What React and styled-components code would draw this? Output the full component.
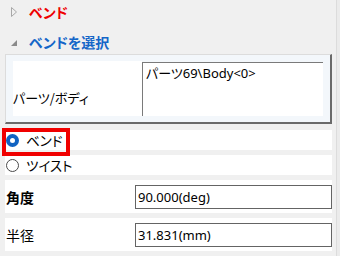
import React from 'react';
import styled, { createGlobalStyle } from 'styled-components';

const GlobalStyle = createGlobalStyle`
  html, body {
    margin: 0;
    padding: 0;
    background: #f0f0f0;
  }
  body {
    font-family: "Noto Sans", "Noto Sans CJK JP", sans-serif;
    color: #000;
  }
`;

const Page = styled.div`
  position: relative;
  width: 340px;
  height: 256px;
  overflow: hidden;
  display: flex;
`;

const Content = styled.div`
  width: 336px;
  display: flex;
  flex-direction: column;
`;

const Edge = styled.div`
  width: 3px;
  border-left: 1px solid #dcdcdc;
  background: #ebebeb;
`;

const Header = styled.div`
  height: 24px;
  margin-top: ${(p) => p.$top || 0}px;
  padding-left: 10px;
  display: flex;
  align-items: center;
  gap: 11px;
`;

const HeaderText = styled.span`
  font-family: "Noto Sans CJK JP", sans-serif;
  font-feature-settings: "palt";
  font-weight: 700;
  font-size: 14px;
  color: ${(p) => p.$color};
`;

const Icon = styled.svg`
  width: 8px;
  height: 10px;
  flex: none;
`;

const GroupBox = styled.div`
  margin: 0 4px 0 5px;
  height: 70px;
  box-sizing: border-box;
  border-top: 1px solid #dcdcdc;
  border-left: 1px solid #dcdcdc;
  border-right: 2px solid #6a6a6a;
  border-bottom: 2px solid #6a6a6a;
  background: #f3f7fb;
  padding: 6px 7px 6px 7px;
  display: flex;
`;

const PartLabel = styled.div`
  width: 129px;
  background: #fff;
  display: flex;
  align-items: flex-end;
  padding-bottom: 9px;
  box-sizing: border-box;
  font-family: "Noto Sans CJK JP", sans-serif;
  font-feature-settings: "palt";
  font-size: 13px;
`;

const PartBox = styled.div`
  flex: 1;
  background: #fff;
  border-top: 1px solid #7a7a7a;
  border-left: 1px solid #7a7a7a;
  margin-top: 1px;
  padding: 1px 0 0 3px;
  font-size: 13px;
  line-height: 18px;
  font-feature-settings: "palt";
`;

const Rows = styled.div`
  margin: 6px 4px 0 5px;
  display: flex;
  flex-direction: column;
  gap: 5px;
`;

const RadioRow = styled.div`
  height: 20px;
  background: #fff;
  display: flex;
  align-items: center;
  padding-left: 1px;
  gap: 7px;
`;

const Radio = styled.span`
  width: 13px;
  height: 13px;
  box-sizing: border-box;
  border-radius: 50%;
  background: #fff;
  border: ${(p) => (p.$checked ? '4px solid #1163c2' : '1px solid #4a4a4a')};
`;

const RadioText = styled.span`
  font-family: "Noto Sans CJK JP", sans-serif;
  font-feature-settings: "palt";
  font-size: 13.5px;
`;

const FieldRow = styled.div`
  height: 33px;
  background: #fff;
  display: flex;
  align-items: center;
`;

const FieldLabel = styled.span`
  width: 129px;
  padding-left: 1px;
  font-family: "Noto Sans CJK JP", sans-serif;
  font-size: 14px;
  font-weight: ${(p) => (p.$bold ? 700 : 400)};
`;

const ValueBox = styled.div`
  flex: 1;
  height: 24px;
  box-sizing: border-box;
  border: 1px solid #646464;
  padding-left: 2px;
  display: flex;
  align-items: center;
  font-size: 13px;
`;

const Highlight = styled.div`
  position: absolute;
  left: 2px;
  top: 128px;
  width: 68px;
  height: 28px;
  box-sizing: border-box;
  border: 4px solid #f00000;
  pointer-events: none;
`;

export default function App() {
  return (
    <>
      <GlobalStyle />
      <Page>
        <Content>
          <Header>
            <Icon viewBox="0 0 8 10">
              <path d="M1.5 0.5 L6.5 5 L1.5 9.5 Z" fill="none" stroke="#a8a8a8" />
            </Icon>
            <HeaderText $color="#ee0000">ベンド</HeaderText>
          </Header>
          <Header $top={6}>
            <Icon viewBox="0 0 8 10">
              <path d="M7 3 L7 9 L1 9 Z" fill="#8a8a8a" />
            </Icon>
            <HeaderText $color="#1466c8">ベンドを選択</HeaderText>
          </Header>
          <GroupBox>
            <PartLabel>パーツ/ボディ</PartLabel>
            <PartBox>パーツ69\Body&lt;0&gt;</PartBox>
          </GroupBox>
          <Rows>
            <RadioRow>
              <Radio $checked />
              <RadioText>ベンド</RadioText>
            </RadioRow>
            <RadioRow>
              <Radio />
              <RadioText>ツイスト</RadioText>
            </RadioRow>
            <FieldRow>
              <FieldLabel $bold>角度</FieldLabel>
              <ValueBox>90.000(deg)</ValueBox>
            </FieldRow>
            <FieldRow>
              <FieldLabel>半径</FieldLabel>
              <ValueBox>31.831(mm)</ValueBox>
            </FieldRow>
          </Rows>
        </Content>
        <Edge />
        <Highlight />
      </Page>
    </>
  );
}
